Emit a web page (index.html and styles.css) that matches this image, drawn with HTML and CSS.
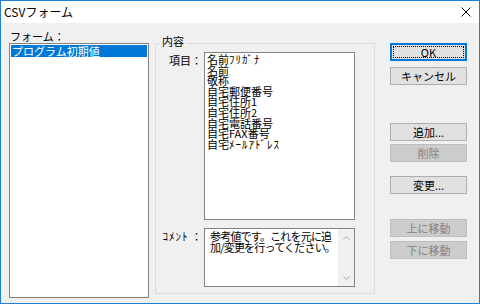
FILE: index.html
```html
<!DOCTYPE html>
<html>
<head lang="ja">
    <meta charset="UTF-8">
    <title>CSVフォーム</title>

    <link rel="stylesheet" href="styles.css">

</head>
<body>

    <div class="window">
        <!-- タイトルバー -->
        <div class="titlebar">
            <span class="title">CSVフォーム</span>
            <svg class="close" width="10" height="10" viewBox="0 0 10 10">
                <path d="M0.5 0.5 L9.5 9.5 M9.5 0.5 L0.5 9.5" stroke="#000" stroke-width="1" fill="none"/>
            </svg>
        </div>

        <div class="client">
            <!-- フォーム一覧 -->
            <div class="forms">
                <div class="label">フォーム：</div>
                <div class="listbox forms-list">
                    <div class="item selected">プログラム初期値</div>
                </div>
            </div>

            <!-- 内容 -->
            <fieldset class="group">
                <legend>内容</legend>
                <div class="field-row">
                    <div class="field-label">項目：</div>
                    <div class="listbox items">
                        <div class="item">名前<span class="hankaku">ﾌﾘｶﾞﾅ</span></div>
                        <div class="item">名前</div>
                        <div class="item">敬称</div>
                        <div class="item">自宅郵便番号</div>
                        <div class="item">自宅住所1</div>
                        <div class="item">自宅住所2</div>
                        <div class="item">自宅電話番号</div>
                        <div class="item">自宅FAX番号</div>
                        <div class="item">自宅<span class="hankaku">ﾒｰﾙｱﾄﾞﾚｽ</span></div>
                    </div>
                </div>
                <div class="field-row comment-row">
                    <div class="field-label"><span class="hankaku">ｺﾒﾝﾄ</span> ：</div>
                    <div class="memo">
                        <div class="memo-text">参考値です。これを元に追<br>加/変更を行ってください。</div>
                        <div class="scrollbar">
                            <svg width="7" height="4" viewBox="0 0 7 4"><path d="M0.5 3.5 L3.5 0.5 L6.5 3.5" stroke="#a3a3a3" fill="none"/></svg>
                            <svg width="7" height="4" viewBox="0 0 7 4"><path d="M0.5 0.5 L3.5 3.5 L6.5 0.5" stroke="#a3a3a3" fill="none"/></svg>
                        </div>
                    </div>
                </div>
            </fieldset>

            <!-- ボタン -->
            <div class="buttons">
                <div class="btn default">OK</div>
                <div class="btn cancel">キャンセル</div>
                <div class="btn add">追加...</div>
                <div class="btn del disabled">削除</div>
                <div class="btn edit">変更...</div>
                <div class="btn up disabled">上に移動</div>
                <div class="btn down disabled">下に移動</div>
            </div>
        </div>
    </div>

</body>
</html>
```
FILE: styles.css
```css
*{
    margin: 0px;
    padding: 0px;
    box-sizing: border-box;
}

body{
    font-family: "Noto Sans CJK JP", "Noto Sans", sans-serif;
    font-size: 11px;
    color: #000;
    background: #fff;
}

.window{
    width: 480px;
    height: 304px;
    border: 1px solid #1c80d5;
    background: #f0f0f0;
    display: flex;
    flex-direction: column;
}

.titlebar{
    height: 22px;
    background: #fff;
    display: flex;
    align-items: center;
    justify-content: space-between;
}

.titlebar .title{
    padding-left: 3px;
    font-size: 12px;
    line-height: 22px;
}

.titlebar .close{
    margin-right: 8px;
}

.client{
    flex: 1;
    display: flex;
    padding: 8px 0 0 8px;
}

.hankaku{
    letter-spacing: 1px;
}

/* 左側 フォーム */
.forms{
    width: 140px;
}

.forms .label{
    height: 12px;
    line-height: 11px;
    padding-left: 1px;
}

.listbox{
    background: #fff;
    border: 1px solid #828282;
}

.forms-list{
    height: 255px;
    padding: 1px;
}

.item{
    white-space: nowrap;
}

.forms-list .item{
    height: 12px;
    line-height: 12px;
    padding-left: 1px;
}

.item.selected{
    background: #0078d7;
    color: #fff;
}

/* 内容 グループ */
.group{
    margin: 5px 0 0 6px;
    width: 220px;
    height: 258px;
    border: 1px solid #dcdcdc;
    padding: 2px 0 6px 0;
    min-width: 0;
}

.group legend{
    margin-left: 4px;
    padding: 0 2px 3px 2px;
    line-height: 11px;
}

.field-row{
    display: flex;
}

.comment-row{
    margin-top: 8px;
}

.field-label{
    width: 48px;
    text-align: right;
    padding: 2px 2px 0 0;
    line-height: 12px;
    white-space: nowrap;
}

.items{
    width: 151px;
    height: 168px;
    padding: 1px 2px;
}

.items .item{
    line-height: 10.6px;
    height: 10.6px;
}

.memo{
    width: 151px;
    height: 59px;
    background: #fff;
    border: 1px solid #828282;
    display: flex;
}

.memo-text{
    flex: 1;
    padding: 2px 0 0 5px;
    line-height: 11px;
    letter-spacing: -0.8px;
    white-space: nowrap;
}

.scrollbar{
    width: 16px;
    background: #f0f0f0;
    display: flex;
    flex-direction: column;
    justify-content: space-between;
    align-items: center;
    padding: 7px 0 6px 0;
}

.scrollbar svg{
    display: block;
}

/* ボタン */
.buttons{
    margin-left: 15px;
    width: 77px;
    display: flex;
    flex-direction: column;
}

.btn{
    height: 18px;
    line-height: 16px;
    text-align: center;
    background: #e1e1e1;
    border: 1px solid #adadad;
}

.btn.default{
    margin-top: 12px;
    border-color: #0078d7;
    box-shadow: inset 0 0 0 1px #0078d7;
    outline: 1px dotted #000;
    outline-offset: -4px;
}

.btn.cancel{ margin-top: 6px; }
.btn.add{ margin-top: 38px; }
.btn.del{ margin-top: 3px; }
.btn.edit{ margin-top: 14px; }
.btn.up{ margin-top: 25px; }
.btn.down{ margin-top: 4px; }

.btn.disabled{
    background: #cccccc;
    border-color: #bfbfbf;
    color: #838383;
}
```
